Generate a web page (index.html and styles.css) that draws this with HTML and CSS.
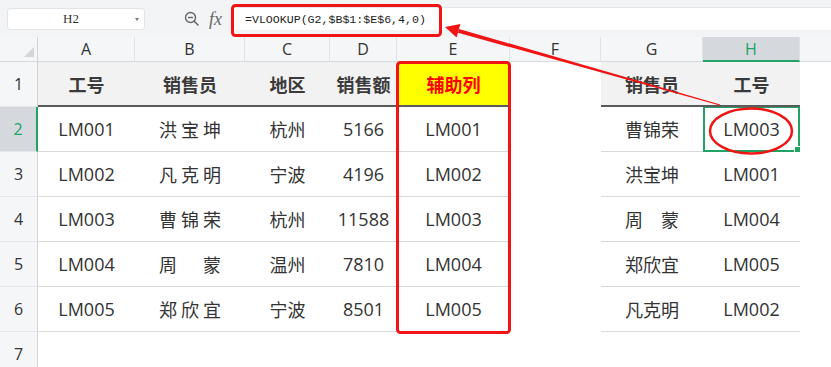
FILE: index.html
```html
<!DOCTYPE html>
<html lang="zh">
<head>
<meta charset="utf-8">
<link rel="stylesheet" href="styles.css">
</head>
<body>
<div class="app">
  <div class="topbar">
    <div class="namebox"><span class="nb-text">H2</span><span class="caret"></span></div>
    <div class="fbtns">
      <svg class="zoomic" width="16" height="16" viewBox="0 0 16 16"><circle cx="6.5" cy="6.5" r="5" fill="none" stroke="#666" stroke-width="1.4"/><line x1="4" y1="6.5" x2="9" y2="6.5" stroke="#666" stroke-width="1.4"/><line x1="10.2" y1="10.2" x2="14" y2="14" stroke="#666" stroke-width="1.6" stroke-linecap="round"/></svg>
      <span class="fx">fx</span>
    </div>
    <div class="formula">=VLOOKUP(G2,$B$1:$E$6,4,0)</div>
  </div>
  <div class="sheet">
    <div class="row colhdr">
      <div class="corner"><span class="tri"></span></div>
      <div class="ch">A</div><div class="ch">B</div><div class="ch">C</div><div class="ch">D</div><div class="ch">E</div><div class="ch">F</div><div class="ch">G</div><div class="ch ch-sel">H</div><div class="ch last"></div>
    </div>
    <div class="row">
      <div class="rh">1</div>
      <div class="hd">工号</div><div class="hd">销售员</div><div class="hd">地区</div><div class="hd">销售额</div><div class="hd yl">辅助列</div><div class="e"></div><div class="hd">销售员</div><div class="hd">工号</div><div class="e"></div>
    </div>
    <div class="row">
      <div class="rh rh-sel">2</div>
      <div class="c">LM001</div><div class="c sp">洪宝坤</div><div class="c">杭州</div><div class="c">5166</div><div class="c">LM001</div><div class="e"></div><div class="c">曹锦荣</div><div class="c sel">LM003</div><div class="e"></div>
    </div>
    <div class="row">
      <div class="rh">3</div>
      <div class="c">LM002</div><div class="c sp">凡克明</div><div class="c">宁波</div><div class="c">4196</div><div class="c">LM002</div><div class="e"></div><div class="c">洪宝坤</div><div class="c">LM001</div><div class="e"></div>
    </div>
    <div class="row">
      <div class="rh">4</div>
      <div class="c">LM003</div><div class="c sp">曹锦荣</div><div class="c">杭州</div><div class="c">11588</div><div class="c">LM003</div><div class="e"></div><div class="c">周　蒙</div><div class="c">LM004</div><div class="e"></div>
    </div>
    <div class="row">
      <div class="rh">5</div>
      <div class="c">LM004</div><div class="c sp">周　蒙</div><div class="c">温州</div><div class="c">7810</div><div class="c">LM004</div><div class="e"></div><div class="c">郑欣宜</div><div class="c">LM005</div><div class="e"></div>
    </div>
    <div class="row">
      <div class="rh">6</div>
      <div class="c">LM005</div><div class="c sp">郑欣宜</div><div class="c">宁波</div><div class="c">8501</div><div class="c">LM005</div><div class="e"></div><div class="c">凡克明</div><div class="c">LM002</div><div class="e"></div>
    </div>
    <div class="row">
      <div class="rh">7</div>
      <div class="e"></div><div class="e"></div><div class="e"></div><div class="e"></div><div class="e"></div><div class="e"></div><div class="e"></div><div class="e"></div><div class="e"></div>
    </div>
  </div>
  <svg class="overlay" width="831" height="367" viewBox="0 0 831 367">
    <rect x="232.5" y="5.5" width="208" height="30" rx="3" fill="none" stroke="#f01414" stroke-width="3"/>
    <rect x="397.5" y="62.5" width="112" height="270" rx="3" fill="none" stroke="#f01414" stroke-width="3"/>
    <ellipse cx="751" cy="131" rx="41" ry="22.5" fill="none" stroke="#f01414" stroke-width="2.5"/>
    <polygon points="720.2,104.4 719.8,105.6 458.0,32.7 459.0,28.9" fill="#f01414"/>
    <polygon points="445,27 460.4,24.1 456.6,37.5" fill="#f01414"/>
  </svg>
</div>
</body>
</html>
```

FILE: styles.css
```css
html, body {
  margin: 0;
  padding: 0;
  background: #ffffff;
  overflow: hidden;
}

.app {
  position: relative;
  width: 831px;
  height: 367px;
  font-family: "Open Sans", "Noto Sans CJK SC", sans-serif;
  color: #333333;
}

.topbar {
  height: 37px;
  box-sizing: border-box;
  background: #f3f4f6;
  display: flex;
  align-items: center;
  padding-left: 7px;
}

.namebox {
  width: 138px;
  height: 22px;
  box-sizing: border-box;
  background: #ffffff;
  border: 1px solid #e2e4e8;
  border-radius: 3px;
  display: flex;
  align-items: center;
  justify-content: center;
  position: relative;
}

.nb-text {
  font-family: "Liberation Serif", "Noto Sans CJK SC", serif;
  font-size: 13px;
  color: #333;
  margin-right: 10px;
}

.caret {
  position: absolute;
  right: 5px;
  top: 9px;
  width: 0;
  height: 0;
  border-left: 2px solid transparent;
  border-right: 2px solid transparent;
  border-top: 3px solid #777;
}

.fbtns {
  width: 87px;
  display: flex;
  align-items: center;
  justify-content: flex-end;
  gap: 9px;
  padding-right: 10px;
  box-sizing: border-box;
}

.zoomic {
  display: block;
}

.fx {
  font-family: "Liberation Serif", "DejaVu Serif", serif;
  font-style: italic;
  font-size: 18px;
  color: #666;
  line-height: 1;
}

.formula {
  flex: 1;
  height: 22px;
  background: #ffffff;
  border-top: 1px solid #e4e6ea;
  display: flex;
  align-items: center;
  padding-left: 13px;
  font-family: "Liberation Mono", monospace;
  font-size: 11.6px;
  color: #222;
}

.sheet {
  display: flex;
  flex-direction: column;
}

.row {
  display: grid;
  grid-template-columns: 38px 97px 110px 85px 67px 113px 91px 102px 97px 1fr;
  height: 45px;
}

.row > div {
  box-sizing: border-box;
  display: flex;
  align-items: center;
  justify-content: center;
  font-size: 18px;
}

.colhdr {
  height: 25px;
  background: #f5f6f8;
}

.colhdr > div {
  font-size: 16px;
  color: #333;
  border-bottom: 1px solid #d6d9de;
  border-right: 1px solid #dfe2e6;
}

.colhdr > .corner {
  border-right: 1px solid #d0d3d8;
  position: relative;
}

.tri {
  position: absolute;
  right: 3px;
  bottom: 4px;
  width: 0;
  height: 0;
  border-left: 10px solid transparent;
  border-bottom: 10px solid #d2d5da;
}

.colhdr > .ch-sel {
  background: #d5d8dd;
  color: #21a366;
  border-bottom: 2px solid #21a366;
}

.colhdr > .last {
  border-right: none;
}

.row > .rh {
  background: #f5f6f8;
  border-right: 1px solid #d0d3d8;
  border-bottom: 1px solid #e4e6ea;
  font-size: 16px;
  color: #333;
}

.row > .rh-sel {
  background: #d5d8dd;
  color: #21a366;
  border-right: 2px solid #21a366;
}

.row > .hd {
  background: #f2f2f2;
  font-weight: bold;
  color: #3a3a3a;
  border-bottom: 2px solid #5a5a5a;
  font-family: "Noto Sans CJK SC", sans-serif;
}

.row > .yl {
  background: #ffff00;
  color: #ff0000;
}

.row > .c {
  border-bottom: 1px solid #d9d9d9;
  color: #333;
}

.row > .sp {
  letter-spacing: 4px;
  padding-left: 4px;
}

.row > .sel {
  border: 2px solid #21a366;
  border-top-width: 1px;
  position: relative;
}

.row > .sel::after {
  content: "";
  position: absolute;
  right: -3px;
  bottom: -3px;
  width: 5px;
  height: 5px;
  background: #21a366;
  border: 1px solid #fff;
}

.overlay {
  position: absolute;
  left: 0;
  top: 0;
  pointer-events: none;
}
```
